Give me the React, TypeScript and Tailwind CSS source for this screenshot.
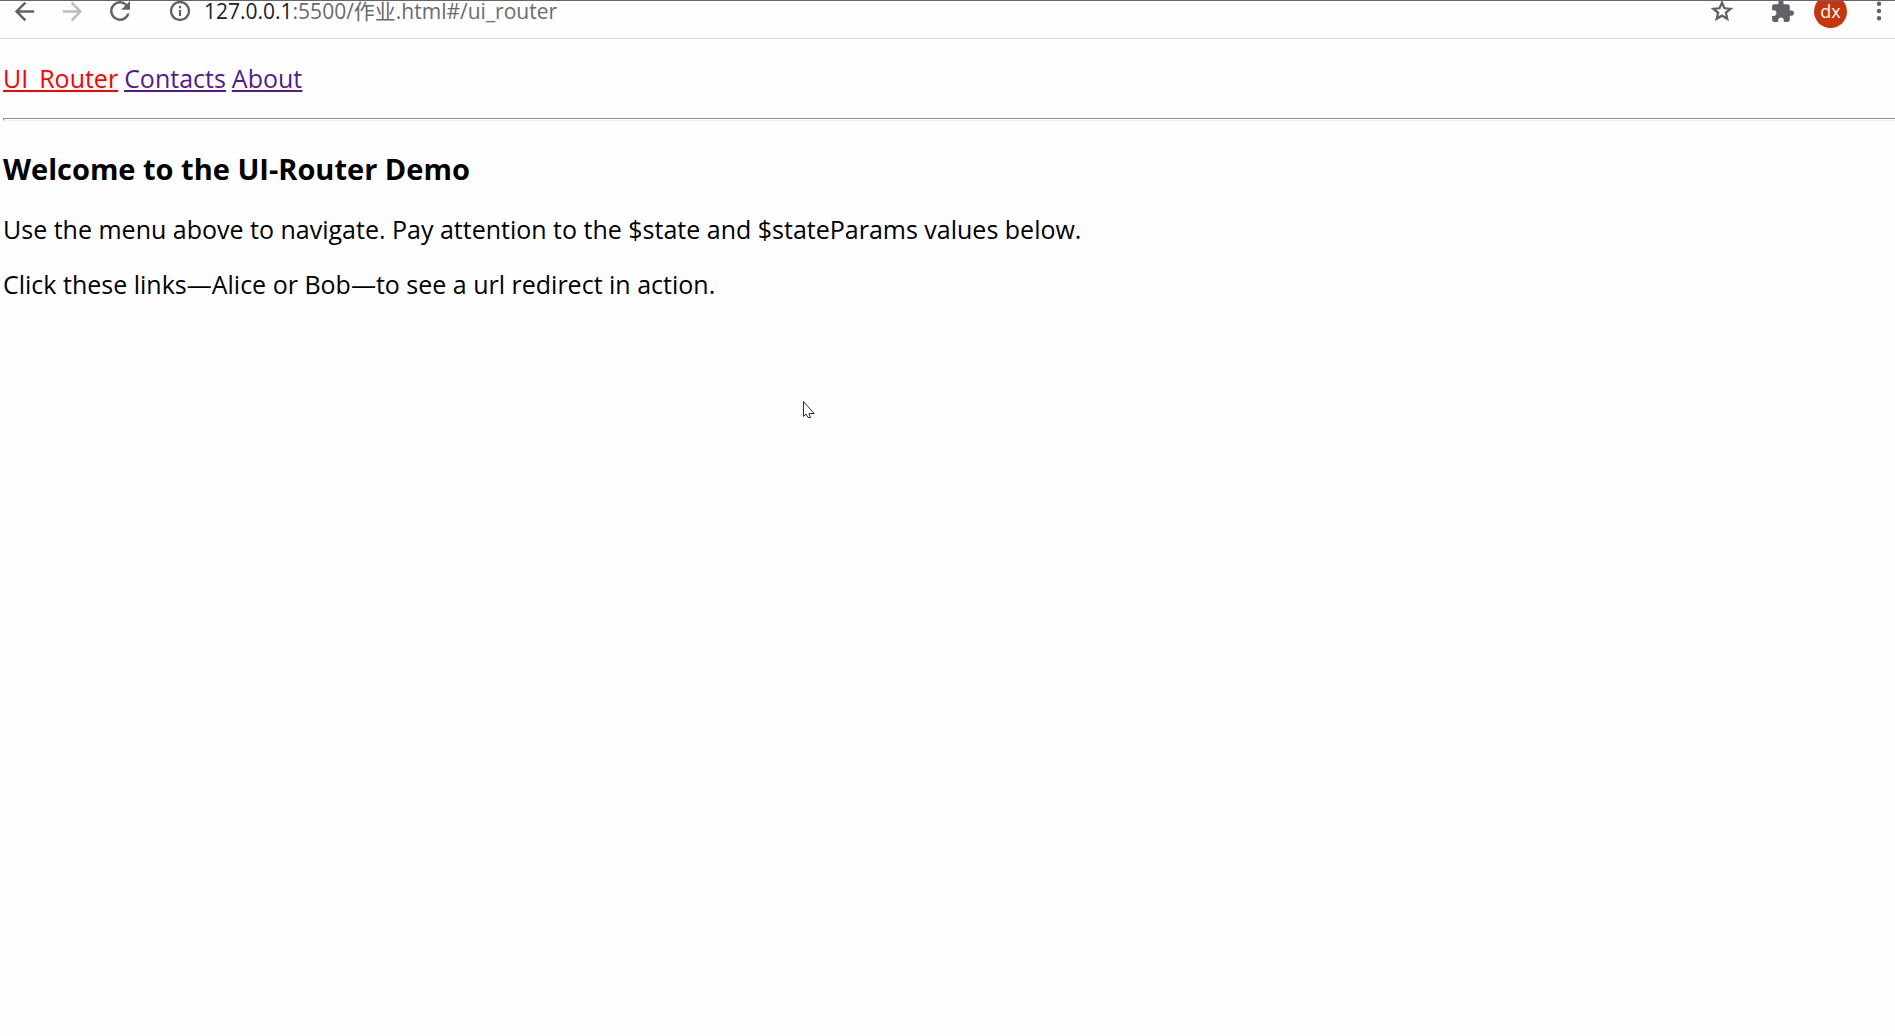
import type { ReactNode } from 'react';

function IconButton({ label, children, className }: { label: string; children: ReactNode; className: string }) {
  return (
    <button type="button" aria-label={label} className={`flex shrink-0 items-center justify-center ${className}`}>
      {children}
    </button>
  );
}

function Icon({ d, className }: { d: string; className: string }) {
  return (
    <svg viewBox="0 0 24 24" fill="currentColor" className={className} aria-hidden="true">
      <path d={d} />
    </svg>
  );
}

const icons = {
  back: 'M20 10.9H7.900l5.600-5.500L12 4l-8 8 8 8 1.500-1.400-5.600-5.500H20z',
  forward: 'M12 4l-1.500 1.400 5.600 5.500H4v2.200h12.100l-5.600 5.500L12 20l8-8z',
  reload:
    'M17.65 6.35A7.96 7.96 0 0 0 12 4a8 8 0 1 0 7.73 10h-2.08A6 6 0 1 1 12 6c1.66 0 3.14.69 4.22 1.78L13 11h7V4z',
  info: 'M10.900 17h2.200v-6h-2.200zM12 1.800a10.200 10.200 0 1 0 0 20.400 10.200 10.200 0 0 0 0-20.400m0 18a7.800 7.800 0 1 1 0-15.600 7.800 7.800 0 0 1 0 15.600M10.900 9.200h2.200V7h-2.200z',
  star: 'M22.500 9.240l-7.500-.700L12 1.500 9 8.540l-7.500.700 5.760 4.930L5.520 21.500 12 17.570l6.480 3.930-1.730-7.330zM12 14.900l-3.260 1.970.870-3.700-2.870-2.490 3.790-.330L12 6.850l1.480 3.500 3.790.330-2.870 2.490.87 3.700z',
  puzzle:
    'M20.5 11H19V7a2 2 0 0 0-2-2h-4V3.500a2.500 2.500 0 0 0-5 0V5H4a2 2 0 0 0-1.990 2v3.800H3.500a2.700 2.700 0 0 1 0 5.400H2V20a2 2 0 0 0 2 2h3.800v-1.500a2.700 2.700 0 0 1 5.400 0V22H17a2 2 0 0 0 2-2v-4h1.500a2.500 2.500 0 0 0 0-5z',
  menu: 'M12 7.700a1.900 1.900 0 1 0 0-3.800 1.900 1.900 0 0 0 0 3.800m0 2.400a1.900 1.900 0 1 0 0 3.800 1.900 1.900 0 0 0 0-3.800m0 6.200a1.900 1.900 0 1 0 0 3.800 1.900 1.900 0 0 0 0-3.800',
};

function Toolbar() {
  return (
    <header className="h-[39px] overflow-hidden border-t border-b border-t-[#66636a] border-b-[#d9d9e0] text-[#5f6368]">
      <div className="flex h-5 items-center pr-0.5">
        <IconButton label="Back" className="w-12">
          <Icon d={icons.back} className="size-[29px]" />
        </IconButton>
        <IconButton label="Forward" className="w-12 text-[#babcbe]">
          <Icon d={icons.forward} className="size-[29px]" />
        </IconButton>
        <IconButton label="Reload" className="w-12">
          <Icon d={icons.reload} className="size-[30px]" />
        </IconButton>
        <div className="flex min-w-0 flex-1 items-center pl-6">
          <IconButton label="Site information" className="w-6">
            <Icon d={icons.info} className="size-6" />
          </IconButton>
          <label htmlFor="address" className="pl-3 text-[21px] leading-5 text-[#202124]">
            127.0.0.1
          </label>
          <input
            id="address"
            type="text"
            defaultValue=":5500/作业.html#/ui_router"
            className="h-8 min-w-0 flex-1 bg-transparent text-[21px] leading-8 text-[#6b6b6e] outline-none"
          />
          <IconButton label="Bookmark" className="w-7">
            <Icon d={icons.star} className="size-[26px]" />
          </IconButton>
        </div>
        <IconButton label="Extensions" className="ml-8 w-7">
          <Icon d={icons.puzzle} className="size-[25px]" />
        </IconButton>
        <IconButton
          label="Profile"
          className="ml-[18px] size-[33px] rounded-full bg-[#c5360c] text-lg leading-5 text-white"
        >
          dx
        </IconButton>
        <IconButton label="Menu" className="ml-[18px] w-7">
          <Icon d={icons.menu} className="size-[30px]" />
        </IconButton>
      </div>
    </header>
  );
}

export default function App() {
  return (
    <div className="min-h-screen bg-[#fefefe] font-['Open_Sans','Noto_Sans_CJK_SC',sans-serif] text-black">
      <Toolbar />
      <main className="pl-[3px] text-[25px] leading-8">
        <nav className="flex gap-1.5 pt-[23px] pb-6 text-[#551a8b] underline decoration-2 underline-offset-2 [text-decoration-skip-ink:none]">
          <a href="#/ui_router" className="text-[#ff0000]">
            UI_Router
          </a>
          <a href="#/contacts">Contacts</a>
          <a href="#/about">About</a>
        </nav>
        <hr className="h-[3px] border-t border-b border-l border-t-[#8e8e8e] border-b-[#eeeeee] border-l-[#8e8e8e]" />
        <h3 className="pt-7 text-[29px] leading-10 font-bold">Welcome to the UI-Router Demo</h3>
        <p className="pt-6">Use the menu above to navigate. Pay attention to the $state and $stateParams values below.</p>
        <p className="pt-[23px]">Click these links—Alice or Bob—to see a url redirect in action.</p>
      </main>
      <svg
        viewBox="0 0 12 19"
        className="pointer-events-none absolute top-[400px] left-[803px] h-[19px] w-3"
        fill="white"
        stroke="#16162a"
        aria-hidden="true"
      >
        <path d="M.5 1.500v15l2.500-2.500 2 3.500h2.500l-1.500-4h5z" strokeWidth="0.9" />
      </svg>
    </div>
  );
}
